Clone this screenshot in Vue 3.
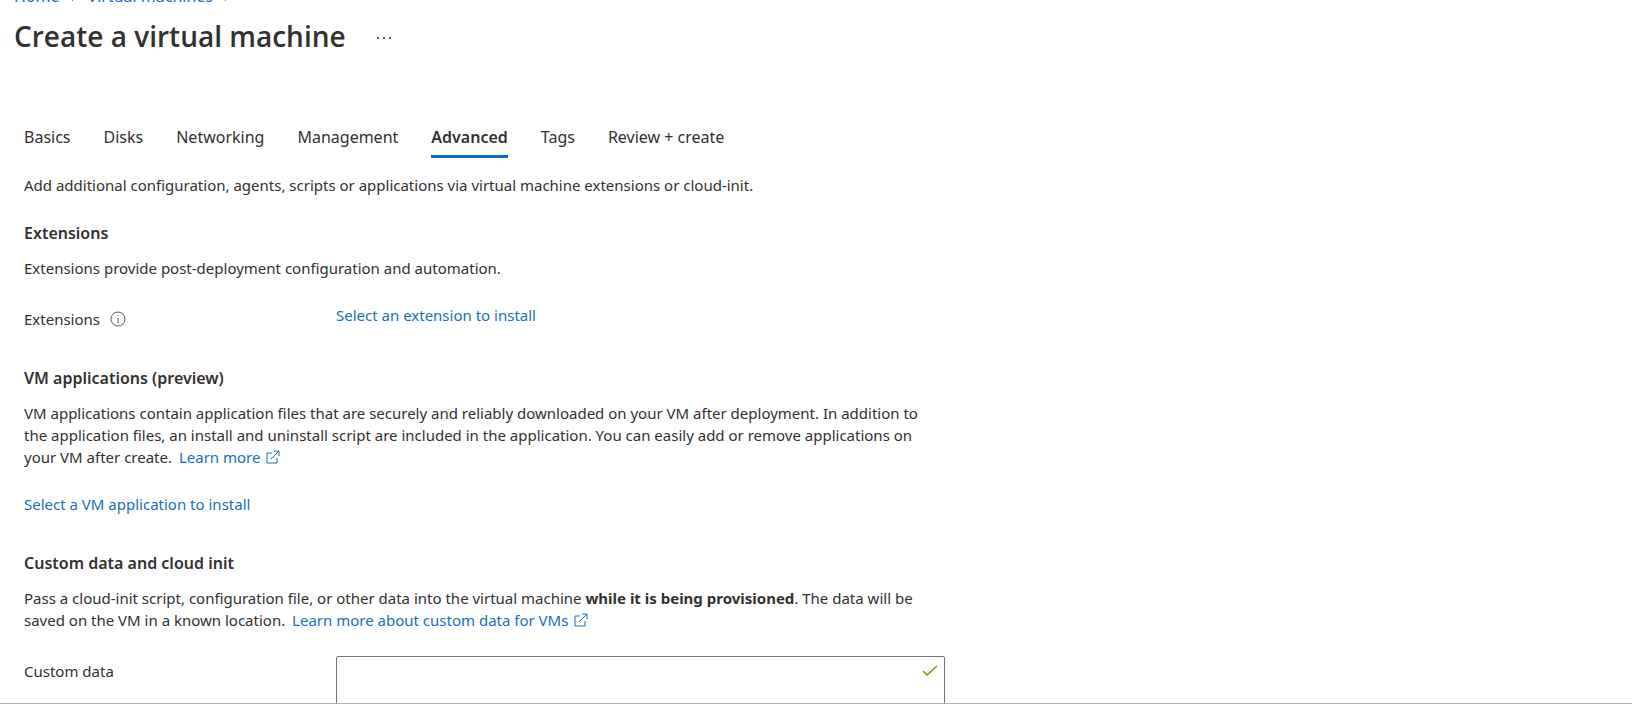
<script setup>
import { ref } from 'vue'

const tabs = ['Basics', 'Disks', 'Networking', 'Management', 'Advanced', 'Tags', 'Review + create']
const activeTab = ref('Advanced')
const customData = ref('')
</script>

<template>
  <div class="page">
    <div class="scroll">
      <nav class="breadcrumb" aria-label="Breadcrumb">
        <a href="#">Home</a>
        <svg class="chevron" viewBox="0 0 8 12" aria-hidden="true"><path d="M2 1l4 5-4 5" /></svg>
        <a href="#">Virtual machines</a>
        <svg class="chevron" viewBox="0 0 8 12" aria-hidden="true"><path d="M2 1l4 5-4 5" /></svg>
      </nav>

      <header class="title-bar">
        <h1>Create a virtual machine</h1>
        <button class="more" type="button" aria-label="More actions">
          <svg viewBox="0 0 16 4" aria-hidden="true">
            <circle cx="2" cy="2" r="1" />
            <circle cx="8" cy="2" r="1" />
            <circle cx="14" cy="2" r="1" />
          </svg>
        </button>
      </header>

      <main class="content">
        <div class="tabs" role="tablist">
          <button
            v-for="tab in tabs"
            :key="tab"
            type="button"
            role="tab"
            class="tab"
            :class="{ active: tab === activeTab }"
            :aria-selected="tab === activeTab"
            @click="activeTab = tab"
          >{{ tab }}</button>
        </div>

        <p class="intro">Add additional configuration, agents, scripts or applications via virtual machine extensions or cloud-init.</p>

        <section>
          <h2>Extensions</h2>
          <p>Extensions provide post-deployment configuration and automation.</p>
          <div class="row">
            <div class="label">
              <span>Extensions</span>
              <svg class="info" viewBox="0 0 16 16" aria-hidden="true">
                <circle cx="8" cy="8" r="7" />
                <path d="M8 7v5M8 4v1" />
              </svg>
            </div>
            <a href="#">Select an extension to install</a>
          </div>
        </section>

        <section>
          <h2>VM applications (preview)</h2>
          <p>
            VM applications contain application files that are securely and reliably downloaded on your VM after deployment. In addition to the application files, an install and uninstall script are included in the application. You can easily add or remove applications on your VM after create.
            <a class="external" href="#">Learn more<svg class="launch" viewBox="0 0 14 14" aria-hidden="true"><path d="M6 3H1v10h10V8M8 1h5v5M13 1L5 9" /></svg></a>
          </p>
          <a class="action" href="#">Select a VM application to install</a>
        </section>

        <section>
          <h2>Custom data and cloud init</h2>
          <p>
            Pass a cloud-init script, configuration file, or other data into the virtual machine <strong>while it is being provisioned</strong>. The data will be saved on the VM in a known location.
            <a class="external" href="#">Learn more about custom data for VMs<svg class="launch" viewBox="0 0 14 14" aria-hidden="true"><path d="M6 3H1v10h10V8M8 1h5v5M13 1L5 9" /></svg></a>
          </p>
          <div class="row">
            <label class="label" for="custom-data">Custom data</label>
            <div class="field">
              <textarea id="custom-data" v-model="customData"></textarea>
              <svg class="check" viewBox="0 0 16 12" aria-hidden="true"><path d="M1 6l4 4L15 1" /></svg>
            </div>
          </div>
        </section>
      </main>
    </div>
    <footer class="footer"></footer>
  </div>
</template>

<style>
body {
  margin: 0;
  background: #fff;
}
</style>

<style scoped>
.page {
  display: flex;
  flex-direction: column;
  height: 100vh;
  font-family: "Noto Sans", "Open Sans", sans-serif;
  font-size: 15px;
  line-height: 22px;
  color: #323130;
}
.scroll {
  flex: 1;
  min-height: 0;
  overflow: hidden;
}
.footer {
  height: 9px;
  border-top: 1px solid #b3b3b3;
}
a {
  color: #1a6fbd;
  text-decoration: none;
}
.breadcrumb {
  display: flex;
  align-items: center;
  gap: 10px;
  margin-top: -15px;
  padding-left: 14px;
  font-size: 16px;
}
.chevron {
  width: 8px;
  height: 12px;
  fill: none;
  stroke: #797775;
}
.title-bar {
  display: flex;
  align-items: center;
  gap: 22px;
  padding: 9px 14px 0;
}
h1 {
  margin: 0;
  font-family: "Open Sans", "Noto Sans", sans-serif;
  font-size: 28px;
  font-weight: 600;
  line-height: 40px;
}
.more {
  display: flex;
  padding: 12px 8px 8px;
  border: 0;
  background: none;
}
.more svg {
  width: 16px;
  height: 4px;
  fill: #323130;
}
.content {
  max-width: 921px;
  padding: 69px 24px 0;
}
.tabs {
  display: flex;
  gap: 33px;
}
.tab {
  padding: 0 0 6px;
  border: 0;
  border-bottom: 3px solid transparent;
  background: none;
  font: inherit;
  font-size: 16px;
  line-height: 24px;
  color: inherit;
}
.tab.active {
  border-color: #0f6cbd;
  font-weight: 600;
}
p {
  max-width: 912px;
  margin: 0;
}
.intro {
  margin-top: 16px;
}
section {
  padding-top: 25px;
}
section + section {
  padding-top: 36px;
}
h2 {
  margin: 0 0 12px;
  font-size: 16px;
  font-weight: 600;
  line-height: 24px;
}
.row {
  display: grid;
  grid-template-columns: 312px 1fr;
  align-items: start;
  padding-top: 25px;
}
.label {
  display: flex;
  align-items: center;
  gap: 10px;
  padding-top: 4px;
}
.info {
  width: 16px;
  height: 16px;
  fill: none;
  stroke: #605e5c;
}
.external {
  margin-left: 3px;
  white-space: nowrap;
}
.launch {
  width: 14px;
  height: 14px;
  margin-left: 6px;
  vertical-align: -1px;
  fill: none;
  stroke: currentColor;
}
.action {
  display: block;
  margin-top: 25px;
}
strong {
  font-weight: 700;
}
.field {
  position: relative;
}
textarea {
  display: block;
  box-sizing: border-box;
  width: 100%;
  height: 120px;
  padding: 6px 32px 6px 8px;
  border: 1px solid #7a7877;
  border-radius: 2px;
  background: #fff;
  font: inherit;
  color: inherit;
  resize: none;
}
.check {
  position: absolute;
  top: 9px;
  right: 7px;
  width: 16px;
  height: 12px;
  fill: none;
  stroke: #57a300;
  stroke-width: 1.3;
}
</style>
